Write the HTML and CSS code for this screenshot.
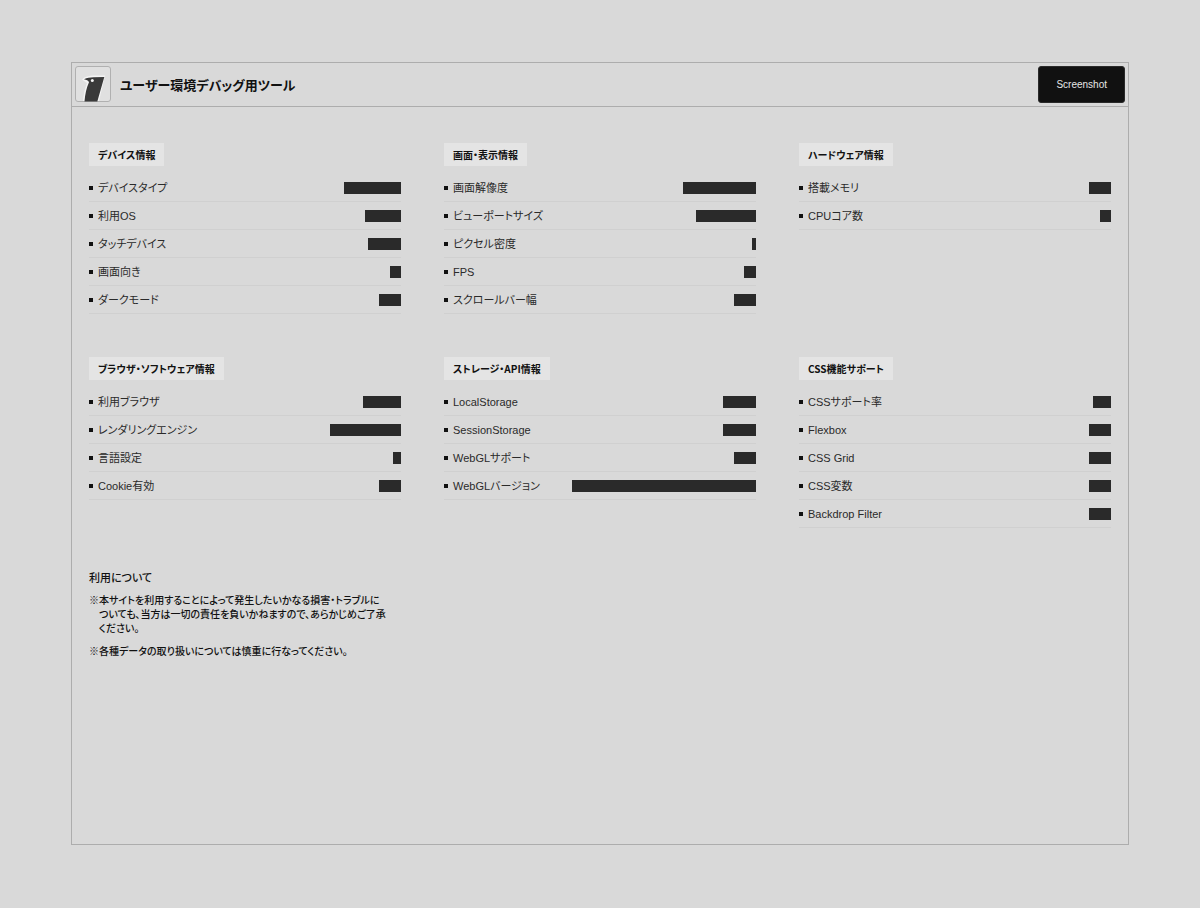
FILE: index.html
```html
<!DOCTYPE html>
<html lang="ja">
  <head>
    <meta charset="UTF-8" />
    <meta name="viewport" content="width=device-width, initial-scale=1.0" />
    <title>ユーザー環境デバッグ用ツール</title>
    <link rel="stylesheet" href="styles.css">
  </head>
  <body>
    <div class="container">
      <header>
        <svg class="logo" viewBox="0 0 36 36" aria-hidden="true">
          <rect x="0.5" y="0.5" width="35" height="35" rx="2.5" fill="#e0e0e0" stroke="#b0b0b0" />
          <path d="M7 13.5C10 10.5 14 9.5 19 9.5L30 9.5L24 35H8C8.5 28 10 22 12 17Z" fill="#f4f4f4" />
          <path d="M9 13.2C12 11.8 15 11.5 18.5 11.3L29.3 11L22.3 35.5H9.5C10.2 28 11.5 21.5 14 16.2C13.3 14.5 11.5 13.6 9 13.2Z" fill="#3a3a3a" />
          <circle cx="17.3" cy="14.5" r="1.5" fill="#f4f4f4" />
        </svg>
        <h1>ユーザー環境デバッグ用ツール</h1>
        <button type="button" class="screenshot-button">Screenshot</button>
      </header>
      <main>
        <section class="panel">
          <h2>デバイス情報</h2>
          <ul>
            <li>デバイスタイプ <span class="value" style="width: 57px"></span></li>
            <li>利用OS <span class="value" style="width: 36px"></span></li>
            <li>タッチデバイス <span class="value" style="width: 33px"></span></li>
            <li>画面向き <span class="value" style="width: 11px"></span></li>
            <li>ダークモード <span class="value" style="width: 22px"></span></li>
          </ul>
        </section>
        <section class="panel">
          <h2>画面・表示情報</h2>
          <ul>
            <li>画面解像度 <span class="value" style="width: 73px"></span></li>
            <li>ビューポートサイズ <span class="value" style="width: 60px"></span></li>
            <li>ピクセル密度 <span class="value" style="width: 4px"></span></li>
            <li>FPS <span class="value" style="width: 12px"></span></li>
            <li>スクロールバー幅 <span class="value" style="width: 22px"></span></li>
          </ul>
        </section>
        <section class="panel">
          <h2>ハードウェア情報</h2>
          <ul>
            <li>搭載メモリ <span class="value" style="width: 22px"></span></li>
            <li>CPUコア数 <span class="value" style="width: 11px"></span></li>
          </ul>
        </section>
        <section class="panel">
          <h2>ブラウザ・ソフトウェア情報</h2>
          <ul>
            <li>利用ブラウザ <span class="value" style="width: 38px"></span></li>
            <li>レンダリングエンジン <span class="value" style="width: 71px"></span></li>
            <li>言語設定 <span class="value" style="width: 8px"></span></li>
            <li>Cookie有効 <span class="value" style="width: 22px"></span></li>
          </ul>
        </section>
        <section class="panel">
          <h2>ストレージ・API情報</h2>
          <ul>
            <li>LocalStorage <span class="value" style="width: 33px"></span></li>
            <li>SessionStorage <span class="value" style="width: 33px"></span></li>
            <li>WebGLサポート <span class="value" style="width: 22px"></span></li>
            <li>WebGLバージョン <span class="value" style="width: 184px"></span></li>
          </ul>
        </section>
        <section class="panel">
          <h2>CSS機能サポート</h2>
          <ul>
            <li>CSSサポート率 <span class="value" style="width: 18px"></span></li>
            <li>Flexbox <span class="value" style="width: 22px"></span></li>
            <li>CSS Grid <span class="value" style="width: 22px"></span></li>
            <li>CSS変数 <span class="value" style="width: 22px"></span></li>
            <li>Backdrop Filter <span class="value" style="width: 22px"></span></li>
          </ul>
        </section>
        <section class="notes">
          <h3>利用について</h3>
          <p>※本サイトを利用することによって発生したいかなる損害・トラブルに<br>ついても、当方は一切の責任を負いかねますので、あらかじめご了承<br>ください。</p>
          <p>※各種データの取り扱いについては慎重に行なってください。</p>
        </section>
      </main>
    </div>
  </body>
</html>
```
FILE: styles.css
```css
* {
  margin: 0;
  padding: 0;
  box-sizing: border-box;
}

body {
  display: flex;
  min-height: 100vh;
  padding: 62px 71px 63px;
  background-color: #d9d9d9;
  color: #111111;
  font-family: "Liberation Sans", "Noto Sans CJK JP", sans-serif;
  font-feature-settings: "palt", "kern";
}

.container {
  flex: 1;
  border: 1px solid #adadad;
}

header {
  display: flex;
  align-items: center;
  padding: 3px;
  border-bottom: 1px solid #adadad;
}

.logo {
  align-self: flex-start;
  width: 36px;
  height: 36px;
}

h1,
h2 {
  font-family: "Noto Sans CJK JP", sans-serif;
}

h1 {
  flex: 1;
  margin-left: 9px;
  font-size: 13px;
  font-weight: 600;
  line-height: 20px;
}

.screenshot-button {
  padding: 0 17px;
  height: 37px;
  border: 1px solid #2a2a2a;
  border-radius: 3px;
  background-color: #111111;
  color: #e6e6e6;
  font-family: inherit;
  font-size: 10px;
  cursor: pointer;
}

main {
  display: grid;
  grid-template-columns: repeat(3, 1fr);
  gap: 43px;
  padding: 36px 17px;
}

h2 {
  width: fit-content;
  margin-bottom: 8px;
  padding: 0 9px;
  background-color: #e4e4e4;
  font-size: 10px;
  font-weight: 600;
  line-height: 23px;
}

ul {
  list-style: none;
}

li {
  display: flex;
  align-items: center;
  height: 28px;
  border-bottom: 1px solid #d0d0d0;
  color: #2a2a2a;
  font-size: 11px;
  line-height: 16px;
}

li::before {
  content: "";
  width: 4px;
  height: 4px;
  margin-right: 5px;
  background-color: #111111;
}

.value {
  height: 12px;
  margin-left: auto;
  background-color: #2a2a2a;
}

.notes h3 {
  margin-bottom: 9px;
  font-size: 11px;
  font-weight: 500;
  line-height: 14px;
}

.notes p {
  margin-bottom: 9px;
  padding-left: 10px;
  text-indent: -10px;
  font-size: 10px;
  font-weight: 500;
  line-height: 14px;
}

@media (max-width: 768px) {
  body {
    padding: 20px;
  }

  main {
    grid-template-columns: 1fr;
  }
}
```
